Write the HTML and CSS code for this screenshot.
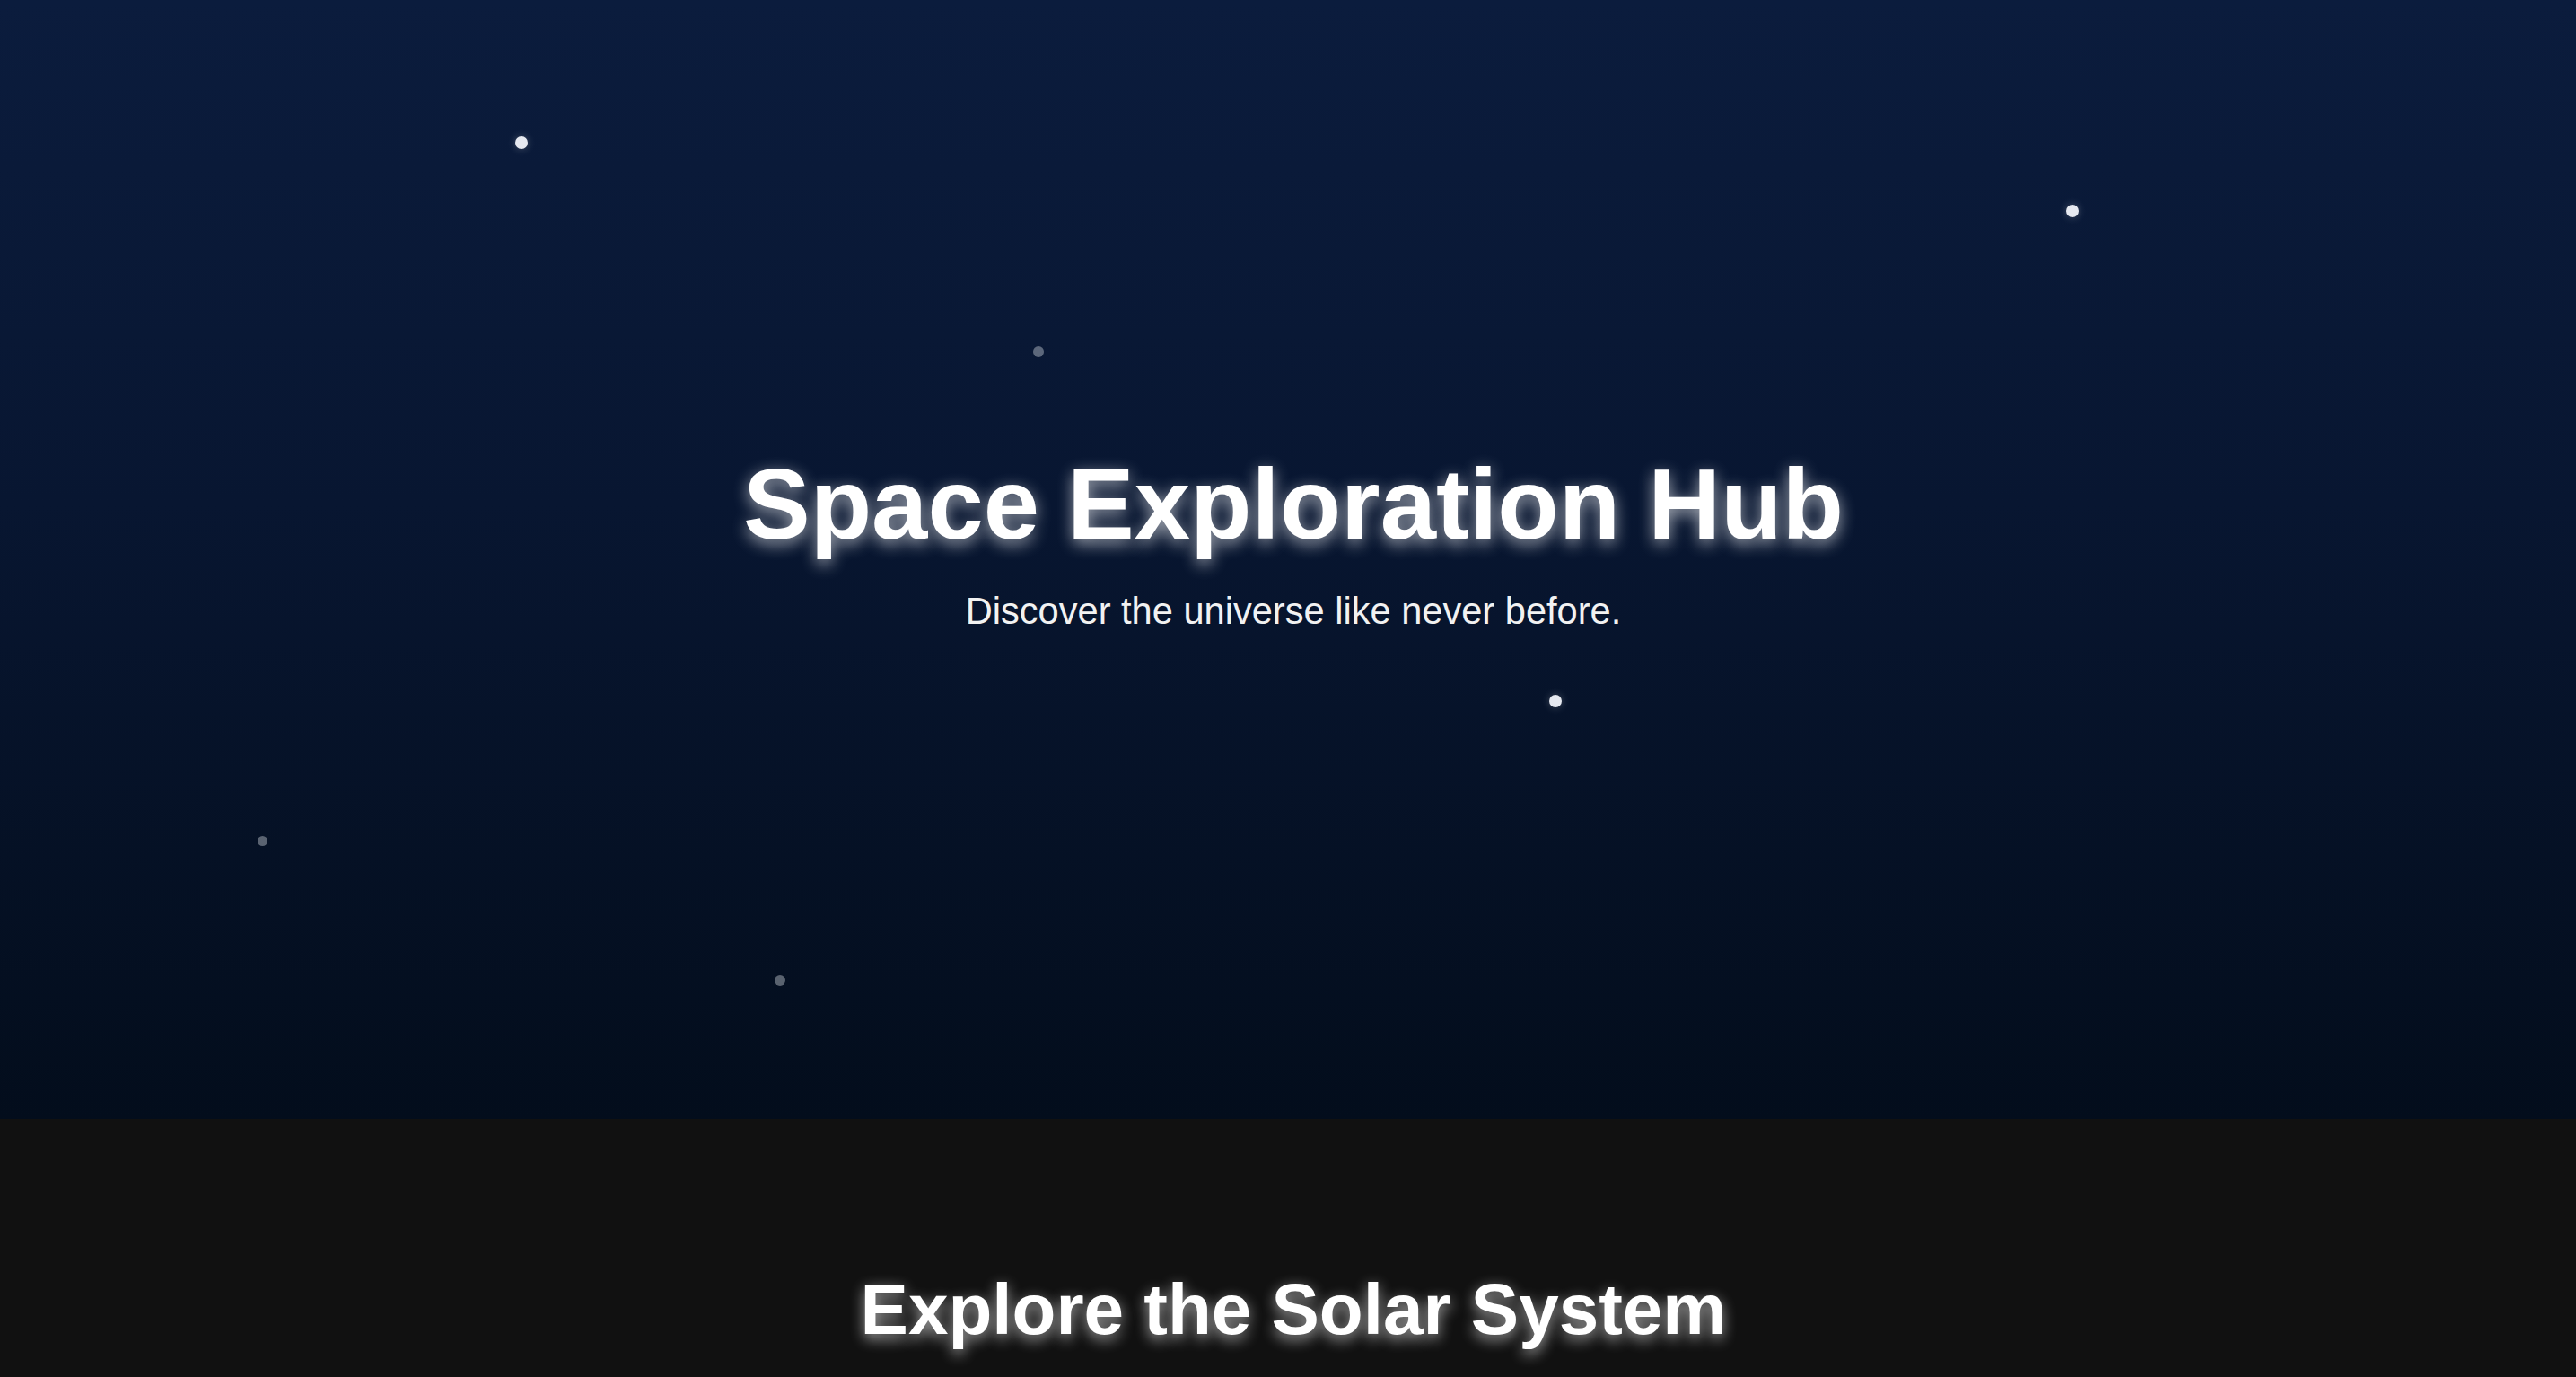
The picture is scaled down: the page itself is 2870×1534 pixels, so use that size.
FILE: index.html
```html
<!DOCTYPE html>
<html lang="en">
<head>
<meta charset="utf-8">
<title>Space Exploration Hub</title>
<link rel="stylesheet" href="styles.css">
</head>
<body>
<header class="hero">
  <span class="star bright" style="left:574px;top:152px"></span>
  <span class="star bright" style="left:2302px;top:228px"></span>
  <span class="star dim" style="left:1151px;top:386px"></span>
  <span class="star bright" style="left:1726px;top:774px"></span>
  <span class="star dim small" style="left:287px;top:931px"></span>
  <span class="star dim" style="left:863px;top:1086px"></span>
  <h1 class="hero-title">Space Exploration Hub</h1>
  <p class="hero-sub">Discover the universe like never before.</p>
</header>
<section class="solar">
  <h2 class="solar-title">Explore the Solar System</h2>
</section>
</body>
</html>
```

FILE: styles.css
```css
html, body {
  margin: 0;
  padding: 0;
}
body {
  font-family: "Liberation Sans", Arial, sans-serif;
  background: #111111;
  color: #ffffff;
}
.hero {
  position: relative;
  height: 1247px;
  box-sizing: border-box;
  padding: 0 0 45px 12px;
  display: flex;
  flex-direction: column;
  align-items: center;
  justify-content: center;
  background: linear-gradient(to bottom, #0b1c3d 0%, #081631 45%, #030d1c 100%);
  overflow: hidden;
}
.hero-title {
  margin: 0;
  font-size: 112px;
  font-weight: 700;
  line-height: normal;
  text-shadow: 0 5px 18px rgba(255, 255, 255, 0.65);
}
.hero-sub {
  margin: 31px 0 0;
  font-size: 41.6px;
  line-height: normal;
  color: #f2f2f2;
}
.star {
  position: absolute;
  width: 14px;
  height: 14px;
  border-radius: 50%;
  background: #e6e9f0;
  box-shadow: 0 0 10px rgba(255, 255, 255, 0.25);
}
.star.dim {
  width: 12px;
  height: 12px;
  opacity: 0.38;
  box-shadow: none;
}
.star.small {
  width: 11px;
  height: 11px;
}
.solar {
  background: #111111;
  padding: 100px 40px 200px 52px;
  text-align: center;
}
.solar-title {
  margin: 66px 0 0;
  font-size: 80px;
  font-weight: 700;
  line-height: normal;
  text-shadow: 0 5px 16px rgba(255, 255, 255, 0.65);
}
```
